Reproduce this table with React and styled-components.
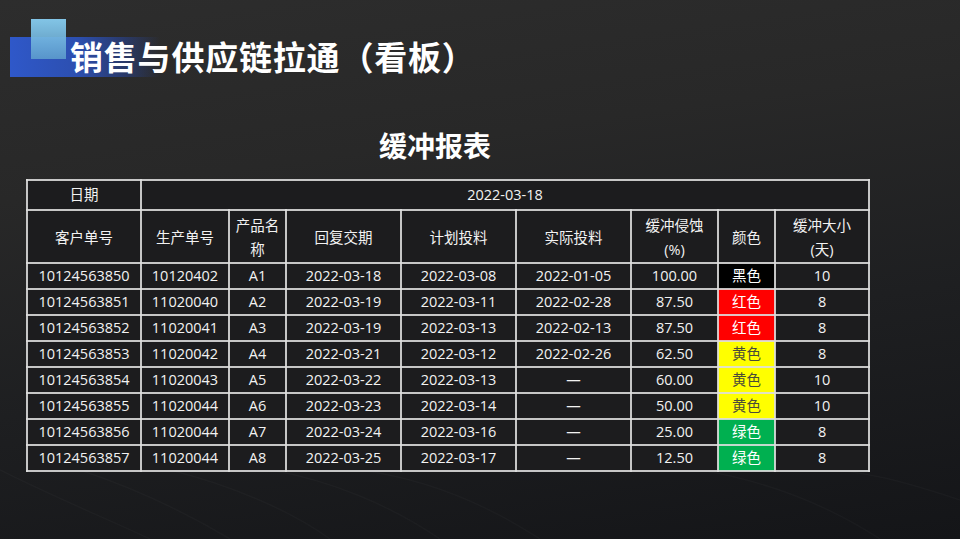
import React from "react";
import styled, { createGlobalStyle } from "styled-components";

const Global = createGlobalStyle`
  html, body { margin: 0; padding: 0; background: #1a1a1c; }
  body { font-family: "Open Sans", "Noto Sans CJK SC", sans-serif; }
`;

const Page = styled.div`
  position: relative;
  width: 960px;
  height: 539px;
  overflow: hidden;
  background: linear-gradient(172deg, #2d2d2d 0%, #282828 30%, #1e1f21 62%, #141518 100%);
  display: flex;
  flex-direction: column;
`;

const Streaks = styled.svg`
  position: absolute;
  inset: 0;
  pointer-events: none;
`;

const TitleBar = styled.div`
  position: relative;
  margin: 36px 0 0 70px;
  height: 40px;
  display: flex;
  align-items: center;
`;

const DecoBar = styled.div`
  position: absolute;
  left: -60px;
  top: 1px;
  width: 150px;
  height: 40px;
  background: linear-gradient(90deg, #2f58c9 0%, #2c4fb0 45%, rgba(40, 70, 160, 0.55) 75%, rgba(40, 60, 120, 0) 100%);
`;

const DecoSquare = styled.div`
  position: absolute;
  left: -39px;
  top: -17px;
  width: 35px;
  height: 40px;
  background: linear-gradient(180deg, rgba(135, 205, 240, 0.95) 0%, rgba(95, 160, 205, 0.85) 100%);
`;

const Title = styled.h1`
  position: relative;
  margin: 0;
  font-family: "Noto Sans CJK SC", sans-serif;
  font-weight: 700;
  font-size: 33px;
  line-height: 40px;
  color: #ffffff;
  letter-spacing: 0.8px;
`;

const SubTitle = styled.h2`
  position: relative;
  margin: 51px 0 0 0;
  width: 870px;
  text-align: center;
  font-family: "Noto Sans CJK SC", sans-serif;
  font-weight: 700;
  font-size: 28px;
  line-height: 36px;
  color: #ffffff;
`;

const TableWrap = styled.div`
  position: relative;
  margin: 16px 0 0 26px;
`;

const Table = styled.table`
  border-collapse: collapse;
  table-layout: fixed;
  width: 842px;
  color: #f2f2f2;
  font-family: "Open Sans", "Noto Sans CJK SC", sans-serif;
  font-size: 14.5px;
`;

const Row = styled.tr`
  height: ${(p) => p.$h}px;
`;

const Cell = styled.td`
  border: 2px solid rgba(222, 222, 222, 0.88);
  background: ${(p) => p.$bg || "#1c1c1e"};
  color: ${(p) => p.$fg || "#f2f2f2"};
  text-align: center;
  vertical-align: middle;
  padding: 0;
  line-height: 20px;
  white-space: nowrap;
`;

const HeadCell = styled(Cell)`
  white-space: normal;
  line-height: 24px;
  padding: 3px 2px 0;
`;

const cols = [114, 88, 57, 115, 115, 115, 87, 57, 94];

const swatch = {
  黑色: { bg: "#000000", fg: "#ffffff" },
  红色: { bg: "#ff0000", fg: "#ffffff" },
  黄色: { bg: "#ffff00", fg: "#4a4a3a" },
  绿色: { bg: "#00b050", fg: "#ffffff" },
};

const rows = [
  ["10124563850", "10120402", "A1", "2022-03-18", "2022-03-08", "2022-01-05", "100.00", "黑色", "10"],
  ["10124563851", "11020040", "A2", "2022-03-19", "2022-03-11", "2022-02-28", "87.50", "红色", "8"],
  ["10124563852", "11020041", "A3", "2022-03-19", "2022-03-13", "2022-02-13", "87.50", "红色", "8"],
  ["10124563853", "11020042", "A4", "2022-03-21", "2022-03-12", "2022-02-26", "62.50", "黄色", "8"],
  ["10124563854", "11020043", "A5", "2022-03-22", "2022-03-13", "—", "60.00", "黄色", "10"],
  ["10124563855", "11020044", "A6", "2022-03-23", "2022-03-14", "—", "50.00", "黄色", "10"],
  ["10124563856", "11020044", "A7", "2022-03-24", "2022-03-16", "—", "25.00", "绿色", "8"],
  ["10124563857", "11020044", "A8", "2022-03-25", "2022-03-17", "—", "12.50", "绿色", "8"],
];

const headers = [
  "客户单号",
  "生产单号",
  <>产品名<br />称</>,
  "回复交期",
  "计划投料",
  "实际投料",
  <>缓冲侵蚀<br />(%)</>,
  "颜色",
  <>缓冲大小<br />(天)</>,
];

export default function App() {
  return (
    <Page>
      <Global />
      <Streaks width="960" height="539" viewBox="0 0 960 539">
        <g fill="none" stroke="rgba(255,255,255,0.025)" strokeWidth="1.5">
          <path d="M0 470 C 60 500, 110 520, 150 539" />
          <path d="M80 470 C 140 490, 190 515, 230 539" />
          <path d="M170 470 C 230 485, 290 510, 330 539" />
          <path d="M270 470 C 330 480, 390 505, 440 539" />
          <path d="M360 470 C 420 478, 480 500, 540 539" />
          <path d="M700 470 C 760 480, 820 500, 880 539" />
          <path d="M820 470 C 860 470, 900 480, 960 500" />
        </g>
      </Streaks>
      <TitleBar>
        <DecoBar />
        <DecoSquare />
        <Title>销售与供应链拉通（看板）</Title>
      </TitleBar>
      <SubTitle>缓冲报表</SubTitle>
      <TableWrap>
        <Table>
          <colgroup>
            {cols.map((w, i) => (
              <col key={i} style={{ width: w }} />
            ))}
          </colgroup>
          <tbody>
            <Row $h={30}>
              <Cell>日期</Cell>
              <Cell colSpan={8}>2022-03-18</Cell>
            </Row>
            <Row $h={52}>
              {headers.map((h, i) => (
                <HeadCell key={i}>{h}</HeadCell>
              ))}
            </Row>
            {rows.map((r, ri) => (
              <Row $h={26} key={ri}>
                {r.map((v, ci) =>
                  ci === 7 ? (
                    <Cell key={ci} $bg={swatch[v].bg} $fg={swatch[v].fg}>
                      {v}
                    </Cell>
                  ) : (
                    <Cell key={ci}>{v}</Cell>
                  )
                )}
              </Row>
            ))}
          </tbody>
        </Table>
      </TableWrap>
    </Page>
  );
}
